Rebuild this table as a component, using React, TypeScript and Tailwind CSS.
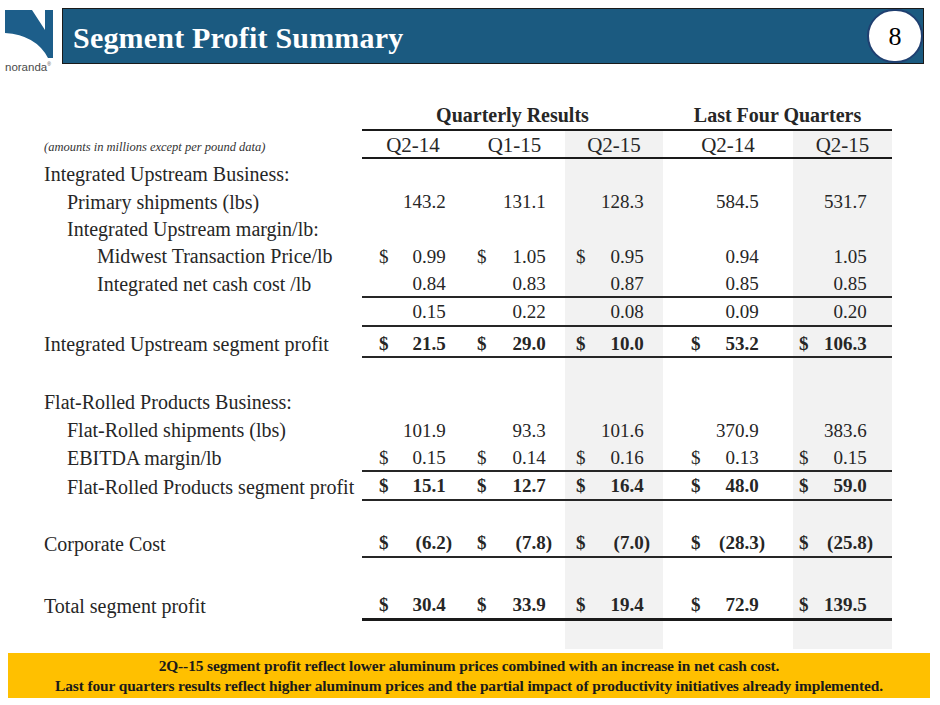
import React from "react";

// Column layout for the five data columns (Q2-14, Q1-15, Q2-15, LFQ Q2-14, LFQ Q2-15)
const cols = [
  { w: "w-[102px]", pad: "pl-[17px] pr-[12px]", shade: "" },
  { w: "w-[101px]", pad: "pl-[13px] pr-[13px]", shade: "" },
  { w: "w-[98px]", pad: "pl-[11px] pr-[13px]", shade: "bg-[#f2f2f2]" },
  { w: "w-[130px]", pad: "pl-[28px] pr-[28px]", shade: "" },
  { w: "w-[99px]", pad: "pl-[6px] pr-[19px]", shade: "bg-[#f2f2f2]" },
];

interface Row {
  label?: string;
  indent?: 0 | 1 | 2;
  values?: string[];
  dollars?: boolean[];
  bold?: boolean;
  border?: "thin" | "thick";
  h: string;
  pt?: string;
}

const all = [true, true, true, true, true];

const rows: Row[] = [
  { label: "Integrated Upstream Business:", indent: 0, h: "h-[29px]" },
  {
    label: "Primary shipments (lbs)",
    indent: 1,
    values: ["143.2", "131.1", "128.3", "584.5", "531.7"],
    h: "h-[27px]",
  },
  { label: "Integrated Upstream margin/lb:", indent: 1, h: "h-[27px]" },
  {
    label: "Midwest Transaction Price/lb",
    indent: 2,
    values: ["0.99", "1.05", "0.95", "0.94", "1.05"],
    dollars: [true, true, true, false, false],
    h: "h-[28px]",
  },
  {
    label: "Integrated net cash cost /lb",
    indent: 2,
    values: ["0.84", "0.83", "0.87", "0.85", "0.85"],
    border: "thin",
    h: "h-[28px]",
  },
  { values: ["0.15", "0.22", "0.08", "0.09", "0.20"], border: "thin", h: "h-[29px]" },
  {
    label: "Integrated Upstream segment profit",
    indent: 0,
    values: ["21.5", "29.0", "10.0", "53.2", "106.3"],
    dollars: all,
    bold: true,
    border: "thin",
    h: "h-[31px]",
    pt: "pt-[3px]",
  },
  { h: "h-[29px]" },
  { label: "Flat-Rolled Products Business:", indent: 0, h: "h-[29px]" },
  {
    label: "Flat-Rolled shipments (lbs)",
    indent: 1,
    values: ["101.9", "93.3", "101.6", "370.9", "383.6"],
    h: "h-[28px]",
  },
  {
    label: "EBITDA margin/lb",
    indent: 1,
    values: ["0.15", "0.14", "0.16", "0.13", "0.15"],
    dollars: all,
    border: "thin",
    h: "h-[28px]",
  },
  {
    label: "Flat-Rolled Products segment profit",
    indent: 1,
    values: ["15.1", "12.7", "16.4", "48.0", "59.0"],
    dollars: all,
    bold: true,
    border: "thin",
    h: "h-[29px]",
  },
  { h: "h-[28px]" },
  {
    label: "Corporate Cost",
    indent: 0,
    values: ["(6.2)", "(7.8)", "(7.0)", "(28.3)", "(25.8)"],
    dollars: all,
    bold: true,
    border: "thin",
    h: "h-[29px]",
  },
  { h: "h-[32px]" },
  {
    label: "Total segment profit",
    indent: 0,
    values: ["30.4", "33.9", "19.4", "72.9", "139.5"],
    dollars: all,
    bold: true,
    border: "thick",
    h: "h-[31px]",
  },
  { h: "h-[28px]" },
];

const indents = ["", "pl-[23px]", "pl-[53px]"];

function NorandaLogo() {
  return (
    <div className="w-[62px] shrink-0 flex flex-col pl-[5px] pt-[2px]">
      <svg className="block shrink-0 w-[48px] h-[48px]" viewBox="0 0 48 48">
        <path d="M0 0 H27 L40 20 V0 H48 V48 H43 Q31 25 0 23 Z" fill="#1d5e8a" />
      </svg>
      <div className="shrink-0 text-[11.5px] leading-none text-[#4a4a4a] mt-[4px] font-['Liberation_Sans',sans-serif]">
        noranda<span className="text-[5px] align-top">®</span>
      </div>
    </div>
  );
}

function Cell({
  i,
  value,
  dollar,
  bold,
  border,
}: {
  i: number;
  value?: string;
  dollar?: boolean;
  bold?: boolean;
  border?: "thin" | "thick";
}) {
  const c = cols[i];
  const neg = value?.startsWith("(");
  return (
    <div
      className={`${c.w} ${c.pad} ${c.shade} h-full flex items-center justify-between ${
        border === "thin" ? "border-b-2 border-[#262626]" : ""
      } ${border === "thick" ? "border-b-[3px] border-[#1a1a1a]" : ""} ${bold ? "font-bold" : ""}`}
    >
      <span>{dollar ? "$" : ""}</span>
      <span>
        {value}
        {value && !neg && <span className="invisible">)</span>}
      </span>
    </div>
  );
}

export default function App() {
  return (
    <div className="w-[940px] h-[705px] bg-white overflow-hidden text-[#262626] font-['Liberation_Serif',serif]">
      {/* Cabecera */}
      <div className="flex items-start pt-[8px] h-[64px]">
        <NorandaLogo />
        <div className="w-[862px] h-[56px] bg-[#1b5a80] border border-[#1a1a1a] flex items-center justify-between">
          <h1 className="text-white font-bold text-[30px] pl-[10px] pt-[3px] tracking-[0.2px]">
            Segment Profit Summary
          </h1>
          <div className="w-[56px] h-[54px] rounded-full bg-white border-2 border-[#1f3f70] flex items-center justify-center text-[26px] text-black">
            8
          </div>
        </div>
      </div>

      {/* Tabla */}
      <div className="mt-[36px] text-[19px] leading-none">
        <div className="flex h-[31px]">
          <div className="w-[362px]" />
          <div className="w-[301px] border-b-2 border-[#1a1a1a] flex items-end justify-center pb-[4px] font-bold text-[20px]">
            Quarterly Results
          </div>
          <div className="w-[229px] border-b-2 border-[#1a1a1a] flex items-end justify-center pb-[4px] font-bold text-[20px]">
            Last Four Quarters
          </div>
        </div>
        <div className="flex h-[28px]">
          <div className="w-[362px] pl-[44px] flex items-end pb-[6px] italic text-[12.5px] text-[#333]">
            (amounts in millions except per pound data)
          </div>
          {["Q2-14", "Q1-15", "Q2-15", "Q2-14", "Q2-15"].map((q, i) => (
            <div
              key={i}
              className={`${cols[i].w} ${cols[i].shade} border-b-2 border-[#1a1a1a] flex items-center justify-center text-[21px] pt-[2px]`}
            >
              {q}
            </div>
          ))}
        </div>
        {rows.map((r, idx) => (
          <div key={idx} className={`flex ${r.h}`}>
            <div
              className={`w-[362px] pl-[44px] flex items-center whitespace-nowrap text-[20px] ${r.pt ?? ""}`}
            >
              <span className={indents[r.indent ?? 0]}>{r.label}</span>
            </div>
            {cols.map((_, i) => (
              <div key={i} className={`h-full ${r.pt ?? ""} ${cols[i].shade}`}>
                <Cell
                  i={i}
                  value={r.values?.[i]}
                  dollar={r.dollars?.[i]}
                  bold={r.bold}
                  border={r.border}
                />
              </div>
            ))}
          </div>
        ))}
      </div>

      {/* Nota inferior */}
      <div className="ml-[8px] mt-[4px] w-[922px] h-[45px] bg-[#ffc000] flex flex-col items-center justify-center text-[15.4px] font-bold leading-[20px] text-[#1a1a1a] tracking-[-0.1px]">
        <p>2Q--15 segment profit reflect lower aluminum prices combined with an increase in net cash cost.</p>
        <p>Last four quarters results reflect higher aluminum prices and the partial impact of productivity initiatives already implemented.</p>
      </div>
    </div>
  );
}
